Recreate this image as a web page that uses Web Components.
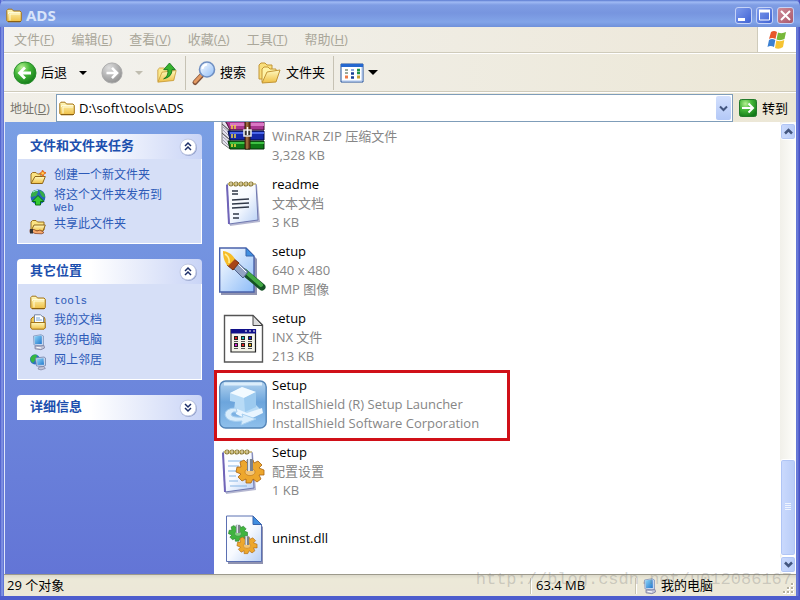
<!DOCTYPE html>
<html lang="zh-CN">
<head>
<meta charset="utf-8">
<title>ADS</title>
<style>
  body {
    margin: 0;
    font: 13px/19px "Open Sans", "Noto Sans CJK SC", sans-serif;
    color: #000;
  }
</style>
</head>
<body>
<explorer-window>
  <title-bar slot="title" label="ADS"></title-bar>
  <menu-bar slot="bars"></menu-bar>
  <tool-bar slot="bars"></tool-bar>
  <address-bar slot="bars" path="D:\soft\tools\ADS"></address-bar>

  <task-pane slot="side">
    <task-group label="文件和文件夹任务">
      <task-link icon="newfolder">创建一个新文件夹</task-link>
      <task-link icon="globe">将这个文件夹发布到 <small>Web</small></task-link>
      <task-link icon="share">共享此文件夹</task-link>
    </task-group>
    <task-group label="其它位置">
      <task-link icon="folder"><small>tools</small></task-link>
      <task-link icon="docs">我的文档</task-link>
      <task-link icon="computer">我的电脑</task-link>
      <task-link icon="network">网上邻居</task-link>
    </task-group>
    <task-group label="详细信息" collapsed></task-group>
  </task-pane>

  <file-list slot="files">
    <file-item icon="rar"><span slot="info">WinRAR ZIP 压缩文件</span><span slot="info">3,328 KB</span></file-item>
    <file-item icon="notepad" name="readme"><span slot="info">文本文档</span><span slot="info">3 KB</span></file-item>
    <file-item icon="bitmap" name="setup"><span slot="info">640 x 480</span><span slot="info">BMP 图像</span></file-item>
    <file-item icon="inx" name="setup"><span slot="info">INX 文件</span><span slot="info">213 KB</span></file-item>
    <file-item icon="installer" name="Setup" marked><span slot="info">InstallShield (R) Setup Launcher</span><span slot="info">InstallShield Software Corporation</span></file-item>
    <file-item icon="config" name="Setup"><span slot="info">配置设置</span><span slot="info">1 KB</span></file-item>
    <file-item icon="dll" name="uninst.dll"></file-item>
  </file-list>
  <scroll-bar slot="files"></scroll-bar>

  <status-bar slot="status"></status-bar>
</explorer-window>

<script>
const gear = (fill, stroke) => `
  <g fill="${fill}" stroke="${stroke}" stroke-width=".8">
    <path d="M-3-11 3-11 4-8 8-10 12-6 9-3 14-1 14 4 9 4 11 8 7 11 3 8 1 12-4 12-4 8-8 10-12 6-9 3-14 1-13-4-9-4-10-9-6-11-3-8Z"/>
    <ellipse cy="1" rx="5" ry="3.600" fill="#fff" fill-opacity=".35" stroke-opacity=".6"/>
  </g>
  <path d="M-3-12h6V0h-6Z" fill="#7c828c"/><path d="M-2-12h2V0h-2Z" fill="#dfe5ec"/>`;

const pad = `
  <path d="M8 8 36 6 39 43 9 47Z" fill="#5a5f9a" opacity=".45"/>
  <path d="M6 5H35L37 41 8 45Z" fill="url(#p)" stroke="#6f78b0"/>
  <path d="M6 6 8 45" stroke="#7064b8" stroke-width="2"/>
  <g fill="none" stroke="#8a7830" stroke-width="1.200"><circle cx="10" cy="5" r="2"/><circle cx="15" cy="5" r="2"/><circle cx="20" cy="5" r="2"/><circle cx="25" cy="5" r="2"/><circle cx="30" cy="5" r="2"/></g>
  <path d="M7 5h4m1 0h4m1 0h4m1 0h4m1 0h4m1 0h3" stroke="#e8cc50"/>`;

const defs = `<defs>
  <linearGradient id="f" x2="0" y2="1"><stop stop-color="#fffac0"/><stop offset="1" stop-color="#efbf45"/></linearGradient>
  <linearGradient id="p" x2="1" y2="1"><stop stop-color="#fff"/><stop offset=".5" stop-color="#f7faff"/><stop offset="1" stop-color="#b7cff5"/></linearGradient>
  <linearGradient id="b" x2="1" y2="1"><stop stop-color="#fff"/><stop offset="1" stop-color="#8dbcf8"/></linearGradient>
  <radialGradient id="g" cx=".35" cy=".25" r=".8"><stop stop-color="#b4f090"/><stop offset=".45" stop-color="#46b83a"/><stop offset="1" stop-color="#127a18"/></radialGradient>
  <radialGradient id="n" cx=".35" cy=".25" r=".8"><stop stop-color="#dedede"/><stop offset="1" stop-color="#8f8f8f"/></radialGradient>
  <linearGradient id="s" x2="1" y2="1"><stop stop-color="#8fd8fa"/><stop offset="1" stop-color="#2478cc"/></linearGradient>
</defs>`;

// view box size, then the drawing
const icons = {
  folder: [16, `<path d="M.8 13.500V3.500L2 2.200H6L7.500 4H14L15.300 5.300V13.500L14 14.800H2Z" fill="url(#f)" stroke="#a57518"/><path d="M2.500 7V5.500H14M4 13.500V7H14" stroke="#fffbd8" fill="none"/><path d="M2 14.500H15" stroke="#8b6010"/>`],
  newfolder: [16, `<path d="M1 14V5L2.500 3.500H6L7.500 5H11V8" fill="#fae383" stroke="#9a7020"/><path d="M1 14.500 5 7.500H15.300L12.500 14.500Z" fill="url(#f)" stroke="#8f6518"/><path d="M12.500 1 13.700 3 16 3.800 13.900 5 13 7.500 11.700 5.200 9.300 4.500 11.700 3.300Z" fill="#f26a1c" stroke="#e07020"/><circle cx="12.700" cy="4.300" r="1.200" fill="#ffd050"/>`],
  globe: [16, `<circle cx="8" cy="8" r="7.400" fill="#2565b5"/><path d="M3 2Q7-.5 8 3L6 7 1 8Q1 4 3 2M9 1Q15 3 15 8 13 9 11 6Z" fill="#35ae46"/><path d="M8 6.500 14 12.500H10.500V16H5.500V12.500H2Z" fill="#35c933" stroke="#087017"/><path d="M3 3Q6 1 8 1.500" stroke="#a8e0ff" fill="none"/>`],
  share: [16, `<path d="M1 12V4L2.500 2.500H6L7.500 4H14V12Z" fill="#fae383" stroke="#9a7020"/><path d="M1 13 4 7H15.300L13 13Z" fill="url(#f)" stroke="#8f6518"/><path d="M0 11.500H4L7 13 10 12 14 14.500 12 15.800 5 15.500 3 14.500H0Z" fill="#f5a86c" stroke="#803818" stroke-width=".7"/><path d="M0 11H3V15.500H0Z" fill="#333"/>`],
  docs: [16, `<path d="M1 14V5L3 3H14L15 5V14Z" fill="#f0cc5c" stroke="#a57518"/><path d="M4.500 9V.8H10.500L13.500 3.500V9Z" fill="#fff" stroke="#7687a5"/><path d="M6 4h4M6 6h6" stroke="#79a6dc"/><path d="M.8 8.500H15.200V14L14 15.200H2L.8 14Z" fill="url(#f)" stroke="#a57518"/>`],
  computer: [16, `<path d="M3.500 2 11 .7 13.500 2V11L11 12 4 11Z" fill="#c7d6ee" stroke="#8095bd" stroke-width=".8"/><path d="M4.300 2.600 11 1.600 11.800 2.500V10L5 10Z" fill="url(#s)"/><path d="M5 12 11 12 14 11.500 14.500 14 11 15.700 5 14.800Z" fill="#c3c6da" stroke="#7a7c9c" stroke-width=".8"/><path d="M6.500 13.300 11 14" stroke="#fff"/>`],
  network: [16, `<circle cx="5" cy="5.500" r="5" fill="#2d70c2"/><path d="M1 3Q4-.5 7 1L6 5 3 9Q-1 6 1 3" fill="#36b740"/><path d="M5.500 4 14 3 15.500 4V11.500L13 12.500 6.500 12Z" fill="#c7d6ee" stroke="#7181a8" stroke-width=".8"/><path d="M6.800 5 13.500 4.300 14 10.800 7.500 11Z" fill="url(#s)"/><path d="M9 13 14 12.500 15.300 14.500 11 15.900 8 15Z" fill="#c3c6da" stroke="#7a7c9c" stroke-width=".7"/>`],
  back: [24, `<circle cx="12" cy="12" r="11" fill="url(#g)" stroke="#278e2b"/><path d="M18 12H7M12 6.500 6.500 12 12 17.500" stroke="#fff" stroke-width="2.800" fill="none"/>`],
  forward: [24, `<circle cx="12" cy="12" r="11" fill="url(#n)" stroke="#a8a8a8"/><path d="M6 12H17M12 6.500 17.500 12 12 17.500" stroke="#fff" stroke-width="2.800" fill="none"/>`],
  up: [24, `<path d="M1 22V8L3 6H9L10 8H20V20Z" fill="#fbe88c" stroke="#c89b38"/><path d="M1 23 6 11 23 9 20 21Z" fill="url(#f)" stroke="#c89b38"/><path d="M8 19Q14 16 13 8H8L15 0 22 8H18Q18 17 8 19Z" fill="#38b32e" stroke="#11701a"/>`],
  search: [24, `<path d="M10 14 3 21.500" stroke="#80523a" stroke-width="5" stroke-linecap="round"/><path d="M10 13.500 3 21" stroke="#e49a62" stroke-width="3" stroke-linecap="round"/><circle cx="15" cy="8.500" r="7.500" fill="url(#b)" stroke="#6f8fc2" stroke-width="1.600"/><path d="M10.500 8Q11 4 15 3.500" stroke="#fff" stroke-width="2" fill="none"/>`],
  folders: [24, `<path d="M1 18V4L3 2H7L9 4H14V18Z" fill="#f9df7c" stroke="#c29536"/><path d="M4 21V8L6 6H10L12 8H18V20Z" fill="#fff3a5" stroke="#c29536"/><path d="M4 22 9 11 22 9 18 21Z" fill="url(#f)" stroke="#c29536"/>`],
  views: [24, `<path d="M1 3H23V21H1Z" fill="#fff" stroke="#1e4f9a"/><path d="M1 3H23V6H1Z" fill="#2467cf"/><path d="M2 20H22M22 6V20" stroke="#a7c2ed"/><path d="M5 9h3M5 12h3" stroke="#9caa9c" stroke-width="2"/><path d="M5 16h3" stroke="#ef7a46" stroke-width="3"/><path d="M11 9h3" stroke="#90a8e0" stroke-width="2"/><path d="M11 12.500h3M11 16.500h3" stroke="#183e96" stroke-width="2.600"/><path d="M17 9h3M17 12h3" stroke="#20944b" stroke-width="2.500"/><path d="M17 16h3" stroke="#c8a035" stroke-width="3"/>`],
  go: [18, `<rect x=".5" y=".5" width="17" height="17" rx="2" fill="url(#g)" stroke="#237b2b"/><path d="M3 9H14M9.500 4.500 14 9 9.500 13.500" stroke="#fff" stroke-width="2" fill="none"/>`],
  flag: [20, `<path d="M4 2Q7 0 10 2L8.500 9Q5 7 2 9Z" fill="#e8572a"/><path d="M11 2.500Q15 4 19 2L17.500 9Q13.500 11 9.500 9.500Z" fill="#77b83a"/><path d="M2 10Q5 8 8.300 10L7 17Q3.500 15 .5 17Z" fill="#3c80d2"/><path d="M9.300 10.500Q13.500 12 17.300 10L16 17Q12 20 8 18Z" fill="#f6c332"/>`],
  rar: [48, `
    <path d="M3 2 11 9V18L3 11ZM3 11 11 18V27L3 20ZM3 20 11 27V36L3 30Z" fill="#e6e3ee" stroke="#555" stroke-width=".8"/>
    <path d="M4 4 11 11M4 7 11 14M4 14 11 20M4 17 11 24M4 24 11 30M4 27 11 34" stroke="#8d8aa0" stroke-width=".8"/>
    <path d="M3 1H40L45 9V17H11Z" fill="#a8368f" stroke="#401030"/><path d="M11 10H45V13H11Z" fill="#d977c4"/>
    <path d="M9 18H45V27H11Z" fill="#1428a8" stroke="#050a40"/><path d="M11 19H45V21H11Z" fill="#4a66e8"/>
    <path d="M9 28H45V36H11Z" fill="#0e7a16" stroke="#042c08"/><path d="M11 29H45V31H11Z" fill="#3fc244"/>
    <path d="M13 12v4m3-4v4M13 21v4m3-4v4M13 31v3m3-3v3" stroke="#f3d53e" stroke-width="1.500"/>
    <path d="M26 4H31V36H26Z" fill="#7a4826" stroke="#301806"/><path d="M28 5V36" stroke="#b88850"/>
    <path d="M25 17H32V23H25Z" fill="#333" stroke="#e8e8e8" stroke-width="1.600"/><path d="M28.500 14V22" stroke="#fff" stroke-width="1.500"/>`],
  notepad: [48, `<g transform="translate(2 -1)">${pad}<path d="M11 12h6M11 15h6M11 21l17-1M11 25l17-1M11 29l17-1M12 35h6M12 39h6" stroke="#303848" stroke-width="1.400"/></g>`],
  bitmap: [48, `
    <path d="M2 3H29L38 12V48H2Z" fill="#353a70" opacity=".55"/>
    <path d="M.7 1H27L35 9V45H.7Z" fill="url(#b)" stroke="#4a62aa" stroke-width="1.400"/>
    <path d="M27 1V9H35Z" fill="#408fe0" stroke="#3764ad"/>
    <path d="M25 25 43 40" stroke="#155225" stroke-width="7" stroke-linecap="round"/><path d="M26 24 42 38" stroke="#43a944" stroke-width="4" stroke-linecap="round"/>
    <path d="M17 14 29 25 24 31 13 20Z" fill="#93a4c4" stroke="#50628c"/><path d="M18 16 27 25" stroke="#fff"/>
    <path d="M14 11 20 16 14 23 8 18Z" fill="#a84517" stroke="#702d10"/>
    <path d="M4 4Q12 5 16 12L9 19Q4 14 4 4" fill="#f6bd28"/><path d="M6 7Q11 10 10 16" stroke="#fff0a0" stroke-width="1.500" fill="none"/>`],
  inx: [48, `
    <path d="M5.500 1.500H34L43.500 11V48H5.500Z" fill="#fff" stroke="#555" stroke-width="1.400"/><path d="M34 1.500V11.500H43.500Z" fill="#ddd" stroke="#444"/>
    <path d="M12 15.500H36.500V38H12Z" fill="#f4f4ea" stroke="#222" stroke-width="1.200"/><path d="M12 15H37V19.500H12Z" fill="#10108a"/>
    <path d="M26 17h2m2 0h2m2 0h2" stroke="#fff"/>
    <path d="M15 22h4v4h-4zM22 22h4v4h-4zM29 22h4v4h-4zM15 29h4v4h-4zM22 29h4v4h-4zM29 29h4v4h-4z" fill="#222"/>
    <path d="M16 23h2v2h-2z" fill="#d22"/><path d="M23 23h2v2h-2z" fill="#2bb"/><path d="M30 23h2v2h-2z" fill="#22c"/><path d="M16 30h2v2h-2z" fill="#c2c"/><path d="M23 30h2v2h-2z" fill="#d22"/><path d="M30 30h2v2h-2z" fill="#da2"/>
    <path d="M15 27.500h4m3 0h4m3 0h4M15 34.500h4m3 0h4m3 0h4" stroke="#555"/>`],
  installer: [48, `
    <defs><linearGradient id="i" x2="0" y2="1"><stop stop-color="#b3d3ef"/><stop offset=".45" stop-color="#6ca5dc"/><stop offset="1" stop-color="#8fc0ec"/></linearGradient></defs>
    <rect x=".7" y="0" width="46.500" height="47" rx="6" fill="url(#i)" stroke="#5384b7" stroke-width="1.400"/>
    <path d="M5 3H43" stroke="#dceefb" stroke-width="3"/>
    <path d="M11 12 23 6 37 11V24L42 29 30 35 15 29 16 21 11 20Z" fill="#b8dbf6"/>
    <path d="M11 12 23 6 37 11 25 17Z" fill="#f2faff"/><path d="M25 17 37 11V26L26 31Z" fill="#9ccaef"/>
    <path d="M16 27 28 32 43 27 44 32 29 39 17 33Z" fill="#e9f5ff"/>
    <path d="M17 27Q6 27 6 34 8 42 23 40L22 44 37 38 23 33 24 36Q12 37 12 33 13 30 18 31Z" fill="#d9edfc" stroke="#a7cff0"/>`],
  config: [48, `<g transform="translate(-2 -1)">${pad}</g><path d="M9 13h14M9 18h11M9 23h8M10 28h7M10 33h9M11 38h17" stroke="#85b4e4"/><g transform="translate(31 23)">${gear('#eda72d', '#a86210')}</g>`],
  dll: [48, `
    <path d="M9 3H35L44 12V49H9Z" fill="#353a70" opacity=".55"/>
    <path d="M7.500 1H34L42.500 9.500V46.500H7.500Z" fill="url(#p)" stroke="#5b70b2"/><path d="M34 1V9.500H42.500Z" fill="#3e8de0" stroke="#3764ad"/>
    <g transform="translate(19 18) scale(.68)">${gear('#3fb43f', '#167020')}</g><g transform="translate(28 30) scale(.72)">${gear('#eda72d', '#a86210')}</g>`],
};

// Gives a class its open shadow root filled with the html that it returns
class XpElement extends HTMLElement {
  constructor() {
    super();
    this.attachShadow({ mode: 'open' });
  }

  connectedCallback() {
    const template = document.createElement('template');
    template.innerHTML = this.render();
    this.shadowRoot.replaceChildren(template.content.cloneNode(true));
  }

  attr(name) {
    return this.getAttribute(name) || '';
  }
}

class XpIcon extends XpElement {
  render() {
    const [box, art] = icons[this.attr('name')];
    const size = this.attr('size') || box;
    return `
      <style>
        :host { display: block; flex: none; }
        svg { display: block; overflow: visible; }
      </style>
      <svg width="${size}" height="${size}" viewBox="0 0 ${box} ${box}" aria-hidden="true">${defs}${art}</svg>`;
  }
}

class ExplorerWindow extends XpElement {
  render() {
    return `
      <style>
        :host {
          display: flex;
          flex-direction: column;
          box-sizing: border-box;
          height: 100vh;
          background: linear-gradient(90deg, #4455c8, #8a9ce8 2px, #5468d0 4px, #5468d0 calc(100% - 4px), #7285dc calc(100% - 3px), #4048c0);
          padding: 0 4px;
          border-bottom: 4px solid #4d5ccd;
        }
        slot[name=title] { display: block; margin: 0 -4px; }
        .main {
          flex: 1;
          min-height: 0;
          display: flex;
          background: #fff;
          border-left: 1px solid #dfe6fa;
        }
      </style>
      <slot name="title"></slot>
      <slot name="bars"></slot>
      <div class="main"><slot name="side"></slot><slot name="files"></slot></div>
      <slot name="status"></slot>`;
  }
}

class TitleBar extends XpElement {
  render() {
    return `
      <style>
        :host {
          display: flex;
          align-items: center;
          box-sizing: border-box;
          height: 27px;
          padding: 3px 6px 0;
          gap: 4px;
          border-radius: 6px 6px 0 0;
          background: linear-gradient(#5a7ad0, #a0baf4 2px, #7f9de4 5px, #7795df 13px, #82a4e8 22px, #6f90da);
        }
        h1 { flex: 1; margin: 0; font-size: 15px; font-weight: 700; color: #d8e4fa; }
        button {
          width: 17px;
          height: 17px;
          padding: 0;
          border: 1px solid #c5d3f7;
          border-radius: 3px;
          background: linear-gradient(135deg, #7f9cec, #3f62d4);
        }
        button.close { background: linear-gradient(135deg, #cf8c98, #a9586c); }
        svg { display: block; width: 15px; height: 15px; fill: none; stroke: #fff; }
      </style>
      <xp-icon name="folder" size="16"></xp-icon>
      <h1>${this.attr('label')}</h1>
      <button aria-label="最小化"><svg viewBox="0 0 15 15"><path d="M2 11.500h7" stroke-width="3"/></svg></button>
      <button aria-label="最大化"><svg viewBox="0 0 15 15"><path d="M2.500 3v9h10V3" /><path d="M2 3h11" stroke-width="3"/></svg></button>
      <button class="close" aria-label="关闭"><svg viewBox="0 0 15 15"><path d="M3 3l9 9M12 3l-9 9" stroke-width="2"/></svg></button>`;
  }
}

class MenuBar extends XpElement {
  render() {
    const items = [['文件', 'F'], ['编辑', 'E'], ['查看', 'V'], ['收藏', 'A'], ['工具', 'T'], ['帮助', 'H']];
    return `
      <style>
        :host {
          display: flex;
          height: 25px;
          border-bottom: 1px solid #cfcbbb;
          background: linear-gradient(90deg, #f3f2ef, #f0eee6 40%, #ede7d8);
        }
        nav { flex: 1; display: flex; align-items: center; gap: 17px; padding-left: 10px; }
        button { border: 0; padding: 0; background: none; font: inherit; color: #aaa79a; }
        .logo {
          display: flex;
          align-items: center;
          justify-content: center;
          width: 38px;
          background: #fff;
          border-left: 1px solid #cfcbbb;
        }
      </style>
      <nav>${items.map(([text, key]) => `<button>${text}(<u>${key}</u>)</button>`).join('')}</nav>
      <div class="logo"><xp-icon name="flag"></xp-icon></div>`;
  }
}

class ToolBar extends XpElement {
  render() {
    return `
      <style>
        :host {
          display: flex;
          align-items: center;
          height: 39px;
          padding-left: 9px;
          border-top: 1px solid #fff;
          border-bottom: 1px solid #cfcbbb;
          background: linear-gradient(90deg, #f3f2ee, #f0eee6 40%, #ece7d6);
          box-sizing: border-box;
        }
        button {
          display: flex;
          align-items: center;
          gap: 4px;
          padding: 0;
          margin-right: 12px;
          border: 0;
          background: none;
          font: inherit;
          color: inherit;
        }
        .drop::after {
          content: "";
          border: 4px solid transparent;
          border-top-color: currentColor;
          border-bottom: 0;
        }
        .drop { margin-right: 14px; }
        .off { color: #c0bdb0; }
        .wide { margin-right: 4px; }
        .wide::after { border-width: 5px 5px 0; }
        .near { margin-right: 8px; }
        hr { width: 1px; height: 34px; margin: 0 6px 0 0; border: 0; background: #c6c2b4; }
      </style>
      <button><xp-icon name="back"></xp-icon>后退</button>
      <button class="drop" aria-label="后退历史"></button>
      <button aria-label="前进"><xp-icon name="forward" size="22"></xp-icon></button>
      <button class="drop off" aria-label="前进历史"></button>
      <button class="near" aria-label="向上"><xp-icon name="up" size="20"></xp-icon></button>
      <hr>
      <button><xp-icon name="search"></xp-icon>搜索</button>
      <button class="near"><xp-icon name="folders"></xp-icon>文件夹</button>
      <hr>
      <button class="wide" aria-label="查看"><xp-icon name="views"></xp-icon></button>
      <button class="drop wide" aria-label="查看方式"></button>`;
  }
}

class AddressBar extends XpElement {
  render() {
    return `
      <style>
        :host {
          display: flex;
          align-items: stretch;
          box-sizing: border-box;
          height: 30px;
          padding: 1px 8px 0 6px;
          border-top: 1px solid #fff;
          background: linear-gradient(90deg, #f1efe8, #ece7d6);
        }
        label { align-self: center; width: 46px; font-size: 12px; color: #77756c; }
        .box {
          flex: 1;
          display: flex;
          align-items: center;
          gap: 4px;
          padding: 1px 1px 1px 2px;
          border: 1px solid #7f9db9;
          background: #fff;
        }
        input { flex: 1; min-width: 0; border: 0; padding: 0; background: none; font: inherit; color: inherit; outline: 0; }
        button { border: 0; padding: 0; font: inherit; color: inherit; background: none; }
        .arrow {
          align-self: stretch;
          display: grid;
          place-items: center;
          width: 15px;
          border-radius: 2px;
          background: linear-gradient(#d3e0fd, #b3c8f7);
        }
        .go { display: flex; align-items: center; gap: 5px; margin-left: 6px; }
      </style>
      <label for="path">地址(<u>D</u>)</label>
      <div class="box">
        <xp-icon name="folder"></xp-icon>
        <input id="path" value="${this.attr('path')}">
        <button class="arrow" aria-label="展开"><svg width="9" height="7" viewBox="0 0 9 7"><path d="M1 1.500 4.500 5 8 1.500" fill="none" stroke="#43567f" stroke-width="2"/></svg></button>
      </div>
      <button class="go"><xp-icon name="go"></xp-icon>转到</button>`;
  }
}

class TaskPane extends XpElement {
  render() {
    return `
      <style>
        :host {
          display: flex;
          flex-direction: column;
          gap: 15px;
          flex: none;
          box-sizing: border-box;
          width: 209px;
          padding: 12px;
          overflow: hidden;
          background: linear-gradient(#7a9fe4, #6375d6);
          font-family: "Liberation Mono", "Noto Sans CJK SC", monospace;
          font-size: 12px;
        }
      </style>
      <slot></slot>`;
  }
}

class TaskGroup extends XpElement {
  render() {
    const collapsed = this.hasAttribute('collapsed');
    const chevrons = collapsed ? 'M7 6l3 3 3-3M7 10l3 3 3-3' : 'M7 9l3-3 3 3M7 13l3-3 3 3';
    return `
      <style>
        :host { display: block; }
        h2 {
          display: flex;
          align-items: center;
          justify-content: space-between;
          height: 25px;
          margin: 0;
          padding: 0 4px 0 13px;
          border-radius: 4px 4px 0 0;
          background: linear-gradient(90deg, #fff 40%, #c9d4f6);
          color: #1c4fae;
          font-size: 13px;
        }
        button { padding: 0; border: 0; background: none; }
        svg { display: block; }
        .body {
          display: flex;
          flex-direction: column;
          gap: 4px;
          padding: 10px 24px 9px 12px;
          border: 1px solid #fff;
          border-top: 0;
          background: #d6dff7;
        }
      </style>
      <h2>${this.attr('label')}
        <button aria-label="${collapsed ? '展开' : '折叠'}">
          <svg width="20" height="20" viewBox="0 0 20 20"><circle cx="10.500" cy="10.500" r="8.500" fill="#8e9cc8"/><circle cx="10" cy="10" r="8" fill="#fff" stroke="#c2cae4"/><path d="${chevrons}" fill="none" stroke="#1d2f68" stroke-width="1.500"/></svg>
        </button>
      </h2>
      ${collapsed ? '' : '<div class="body"><slot></slot></div>'}`;
  }
}

class TaskLink extends XpElement {
  render() {
    return `
      <style>
        :host { display: block; }
        a {
          display: flex;
          align-items: flex-start;
          gap: 8px;
          color: #2c5ab8;
          text-decoration: none;
        }
        span { padding-top: 1px; line-height: 12px; }
        ::slotted(small) { font-size: 11px; }
      </style>
      <a href="#"><xp-icon name="${this.attr('icon')}"></xp-icon><span><slot></slot></span></a>`;
  }
}

class FileList extends XpElement {
  render() {
    // scrolled to the end, so the first row is cut by the top edge
    return `
      <style>
        :host {
          flex: 1;
          min-width: 0;
          display: flex;
          flex-direction: column;
          justify-content: flex-end;
          padding-bottom: 2px;
          overflow: hidden;
        }
      </style>
      <slot></slot>`;
  }
}

class FileItem extends XpElement {
  render() {
    const name = this.attr('name');
    return `
      <style>
        :host {
          position: relative;
          flex: none;
          display: flex;
          align-items: center;
          gap: 5px;
          height: 67px;
          padding-left: 5px;
        }
        :host([marked])::after {
          content: "";
          position: absolute;
          inset: -1px auto -3px 0;
          width: 290px;
          border: 3px solid #d01018;
        }
        .text { display: flex; flex-direction: column; color: #868686; }
        .name { color: #000; min-height: 19px; }
      </style>
      <xp-icon name="${this.attr('icon')}"></xp-icon>
      <div class="text"><span class="name">${name}</span><slot name="info"></slot></div>`;
  }
}

class ScrollBar extends XpElement {
  render() {
    return `
      <style>
        :host {
          display: flex;
          flex-direction: column;
          flex: none;
          width: 16px;
          padding: 1px 0;
          background: linear-gradient(90deg, #f1f0ea, #fefefb);
        }
        button, .thumb {
          display: grid;
          place-items: center;
          box-sizing: border-box;
          height: 17px;
          padding: 0;
          border: 1px solid #fff;
          border-radius: 3px;
          background: linear-gradient(90deg, #cbdafd, #b8ccf8);
          box-shadow: inset 0 0 0 1px #b0c5f5;
        }
        .track { flex: 1; display: flex; flex-direction: column; }
        .track::before { content: ""; flex: 321; }
        .thumb { flex: 96; }
        path { fill: none; stroke: #43567f; stroke-width: 2.500; }
        .thumb path { stroke: #eef4fe; stroke-width: 1; }
      </style>
      <button aria-label="向上滚动"><svg width="9" height="7" viewBox="0 0 9 7"><path d="M1 5.500 4.500 2 8 5.500"/></svg></button>
      <div class="track"><div class="thumb"><svg width="7" height="8" viewBox="0 0 7 8"><path d="M0 .5h6M0 2.500h6M0 4.500h6M0 6.500h6"/></svg></div></div>
      <button aria-label="向下滚动"><svg width="9" height="7" viewBox="0 0 9 7"><path d="M1 1.500 4.500 5 8 1.500"/></svg></button>`;
  }
}

class StatusBar extends XpElement {
  render() {
    return `
      <style>
        :host {
          position: relative;
          display: flex;
          align-items: center;
          box-sizing: border-box;
          height: 22px;
          padding-left: 3px;
          border-top: 1px solid #9d9a8c;
          background: linear-gradient(#dcd9ca, #ece9d8 4px, #ece7d8);
        }
        .count { flex: 1; }
        .cell {
          display: flex;
          align-items: center;
          gap: 4px;
          box-sizing: border-box;
          height: 16px;
          padding-left: 5px;
          border-left: 1px solid #c8c4b2;
          box-shadow: inset 1px 0 #fff;
        }
        .size { width: 105px; }
        .zone { width: 161px; }
        .grip { position: absolute; right: 1px; bottom: 1px; }
        .mark {
          position: absolute;
          right: 4px;
          top: -5px;
          font: 17px/20px "Liberation Mono", monospace;
          color: rgba(120, 120, 120, .3);
        }
      </style>
      <span class="count">29 个对象</span>
      <span class="cell size">63.4 MB</span>
      <span class="cell zone"><xp-icon name="computer"></xp-icon>我的电脑</span>
      <svg class="grip" width="12" height="12" viewBox="0 0 12 12"><path d="M8 0h3v3h-3zM4 4h3v3h-3zM8 4h3v3h-3zM0 8h3v3h-3zM4 8h3v3h-3zM8 8h3v3h-3z" fill="#fff"/><path d="M8 0h2v2h-2zM4 4h2v2h-2zM8 4h2v2h-2zM0 8h2v2h-2zM4 8h2v2h-2zM8 8h2v2h-2z" fill="#b5b19f"/></svg>
      <span class="mark">http://blog.csdn.net/u012086167</span>`;
  }
}

customElements.define('xp-icon', XpIcon);
customElements.define('explorer-window', ExplorerWindow);
customElements.define('title-bar', TitleBar);
customElements.define('menu-bar', MenuBar);
customElements.define('tool-bar', ToolBar);
customElements.define('address-bar', AddressBar);
customElements.define('task-pane', TaskPane);
customElements.define('task-group', TaskGroup);
customElements.define('task-link', TaskLink);
customElements.define('file-list', FileList);
customElements.define('file-item', FileItem);
customElements.define('scroll-bar', ScrollBar);
customElements.define('status-bar', StatusBar);
</script>
</body>
</html>
